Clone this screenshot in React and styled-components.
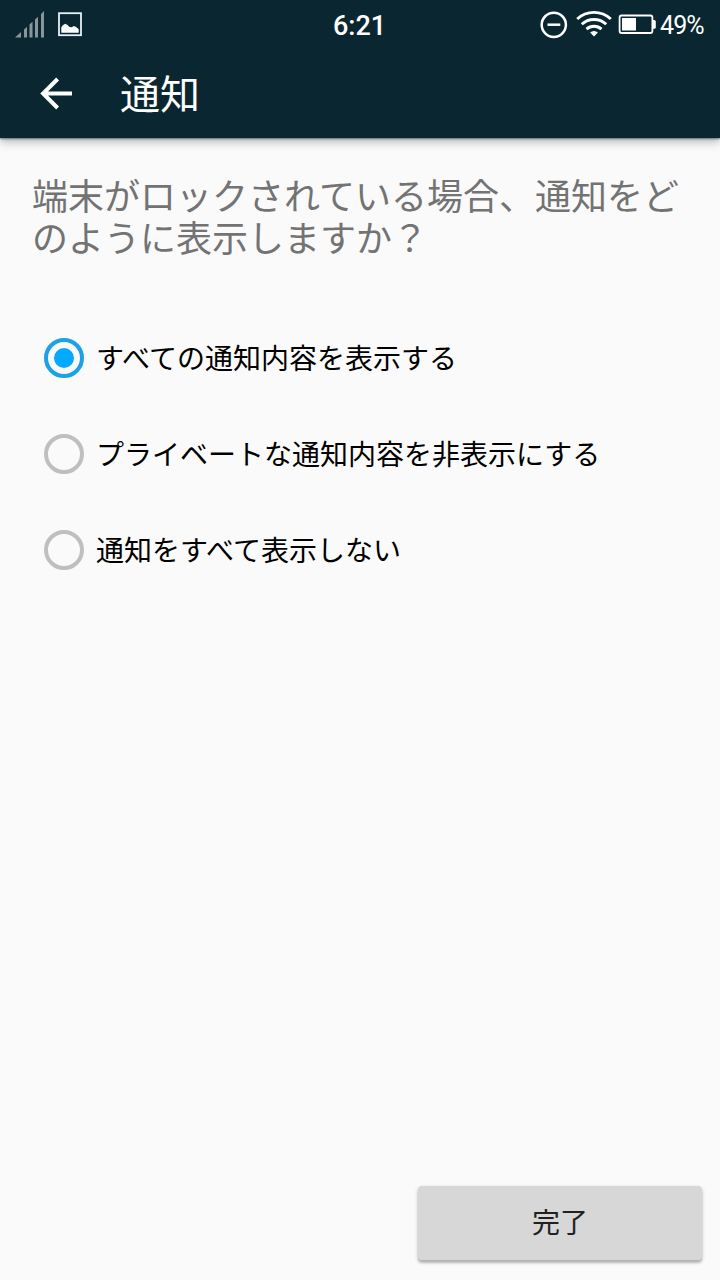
import React, { useState } from "react";
import styled, { createGlobalStyle } from "styled-components";

const GlobalStyle = createGlobalStyle`
  *, *::before, *::after { box-sizing: border-box; }
  body { margin: 0; background: #fafafa; font-family: Roboto, "Noto Sans CJK JP", sans-serif; }
  button { font-family: inherit; }
`;

const Screen = styled.div`
  display: flex;
  flex-direction: column;
  width: 720px;
  height: 1280px;
  background: #fafafa;
  overflow: hidden;
`;

const Header = styled.header`
  flex: none;
  height: 138px;
  background: #0a2731;
  color: #fff;
  box-shadow: 0 1px 2px rgba(0, 0, 0, 0.45), 0 4px 9px rgba(0, 0, 0, 0.26);
`;

const StatusBar = styled.div`
  display: grid;
  grid-template-columns: 1fr auto 1fr;
  align-items: center;
  height: 50px;
  padding: 0 16px 0 14px;
`;

const StatusGroup = styled.div`
  display: flex;
  align-items: center;
  justify-content: ${(p) => (p.$end ? "flex-end" : "flex-start")};
  height: 50px;

  svg { display: block; flex: none; }
`;

const Clock = styled.span`
  height: 50px;
  font-size: 27px;
  font-weight: 500;
  line-height: 52px;
  padding-left: 1px;
`;

const Percent = styled.span`
  width: 44px;
  height: 50px;
  font-size: 25px;
  letter-spacing: -0.9px;
  line-height: 52px;
  white-space: nowrap;
`;

const AppBar = styled.div`
  display: flex;
  align-items: center;
  height: 88px;
  padding-left: 32px;
`;

const BackButton = styled.button`
  display: flex;
  width: 48px;
  height: 48px;
  padding: 0;
  border: 0;
  background: none;
  color: inherit;
`;

const Title = styled.h1`
  margin: 0 0 0 40px;
  padding-top: 4px;
  font-size: 40px;
  font-weight: 400;
  line-height: 56px;
`;

const Content = styled.main`
  flex: 1;
  padding: 39px 32px 0;
`;

const Question = styled.p`
  margin: 0;
  font-size: 36px;
  line-height: 42px;
  color: #737373;
`;

const Options = styled.div`
  display: flex;
  flex-direction: column;
  margin-top: 49px;
`;

const Option = styled.button`
  display: flex;
  align-items: center;
  gap: 12px;
  height: 96px;
  padding: 0 0 0 12px;
  border: 0;
  background: none;
  color: #000;
  font-size: 28px;
  line-height: 40px;
  text-align: left;
`;

const OptionLabel = styled.span`
  padding-top: 4px;
`;

const Radio = styled.span`
  display: flex;
  align-items: center;
  justify-content: center;
  flex: none;
  width: 40px;
  height: 40px;
  border: 4px solid ${(p) => (p.$on ? "#1ba1e8" : "#bfbfbf")};
  border-radius: 50%;

  &::after {
    content: "";
    width: 20px;
    height: 20px;
    border-radius: 50%;
    background: ${(p) => (p.$on ? "#03a9ff" : "transparent")};
  }
`;

const Footer = styled.footer`
  display: flex;
  justify-content: flex-end;
  padding: 0 18px 20px;
`;

const DoneButton = styled.button`
  width: 284px;
  height: 74px;
  padding: 1px 0 0;
  border: 0;
  border-radius: 4px;
  background: #d7d7d7;
  color: #212121;
  font-size: 28px;
  line-height: 40px;
  box-shadow: 0 3px 2px rgba(0, 0, 0, 0.16), 0 2px 4px rgba(0, 0, 0, 0.2);
`;

const SignalIcon = () => (
  <svg width="32" height="50" viewBox="14 0 32 50" fill="#89959a">
    <path d="M15 37.5 21 32v5.5zM24 29.5l3-2.7v10.7h-3zM29.5 24.6l3-2.8v15.7h-3zM35 19.6l3-2.8v20.7h-3zM41 14l3-3v26.5h-3z" />
  </svg>
);

const PictureIcon = () => (
  <svg width="38" height="50" viewBox="46 0 38 50">
    <rect x="59" y="13.2" width="22" height="22" fill="none" stroke="#e6f1f5" strokeWidth="1.8" />
    <path d="M61.3 32.7v-5.5l1.5-2 2.5-1.5 2.2 1.4 2 2 2.2.2 2.2-1.2 2.2 1 2.6 2.2v3.4z" fill="#fff" />
  </svg>
);

const DoNotDisturbIcon = () => (
  <svg width="34" height="50" viewBox="538 0 34 50" fill="none" stroke="#fff">
    <circle cx="553.8" cy="24.8" r="12.1" strokeWidth="2.5" />
    <path d="M547.5 24.7h12.8" strokeWidth="2.5" />
  </svg>
);

const WifiIcon = () => (
  <svg width="44" height="50" viewBox="572 0 44 50" fill="none" stroke="#fff" strokeWidth="2.9">
    <path d="M577.2 19a24.6 24.6 0 0 1 33.6 0" />
    <path d="M581.8 24.2a18 18 0 0 1 24.4 0" />
    <path d="M586.5 29.2a11.2 11.2 0 0 1 15 0" />
    <path d="M590.1 32.5a5.8 5.8 0 0 1 7.8 0L594 36.4z" fill="#fff" stroke="none" />
  </svg>
);

const BatteryIcon = () => (
  <svg width="44" height="50" viewBox="616 0 44 50">
    <rect x="619.6" y="15.5" width="32.8" height="17.5" rx="2" fill="none" stroke="#fff" strokeWidth="1.8" />
    <path d="M653 20h1.2q1.6 0 1.6 1.5v5.8q0 1.5-1.6 1.5H653z" fill="#fff" />
    <rect x="622" y="18" width="14" height="12.5" fill="#fff" />
  </svg>
);

const BackIcon = () => (
  <svg width="48" height="48" viewBox="32 70 48 48" fill="none" stroke="#fff" strokeWidth="4">
    <path d="M72 93.5H43M57.6 79 43.1 93.5 57.6 108" />
  </svg>
);

const choices = [
  "すべての通知内容を表示する",
  "プライベートな通知内容を非表示にする",
  "通知をすべて表示しない",
];

export default function App() {
  const [selected, setSelected] = useState(0);
  return (
    <Screen lang="ja">
      <GlobalStyle />
      <Header>
        <StatusBar>
          <StatusGroup>
            <SignalIcon />
            <PictureIcon />
          </StatusGroup>
          <Clock>6:21</Clock>
          <StatusGroup $end>
            <DoNotDisturbIcon />
            <WifiIcon />
            <BatteryIcon />
            <Percent>49%</Percent>
          </StatusGroup>
        </StatusBar>
        <AppBar>
          <BackButton aria-label="戻る">
            <BackIcon />
          </BackButton>
          <Title>通知</Title>
        </AppBar>
      </Header>
      <Content>
        <Question>端末がロックされている場合、通知をどのように表示しますか？</Question>
        <Options role="radiogroup">
          {choices.map((label, i) => (
            <Option key={label} role="radio" aria-checked={i === selected} onClick={() => setSelected(i)}>
              <Radio $on={i === selected} />
              <OptionLabel>{label}</OptionLabel>
            </Option>
          ))}
        </Options>
      </Content>
      <Footer>
        <DoneButton>完了</DoneButton>
      </Footer>
    </Screen>
  );
}
